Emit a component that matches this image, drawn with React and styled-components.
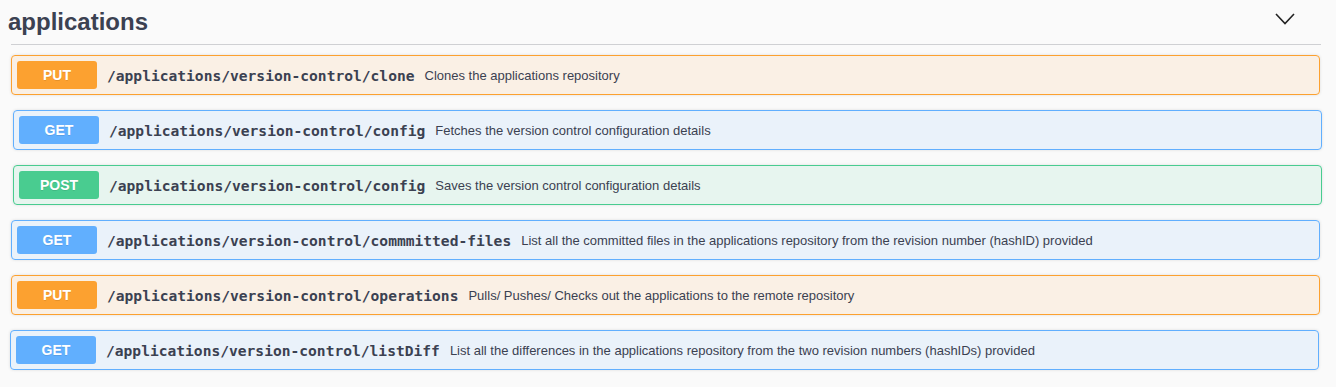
import React from "react";
import styled, { createGlobalStyle } from "styled-components";

const Global = createGlobalStyle`
  html, body { margin: 0; padding: 0; background: #fafafa; }
  body { font-family: "Liberation Sans", Arial, sans-serif; color: #3b4151; }
`;

const COLORS = {
  PUT: { main: "#fca130", bg: "rgba(252,161,48,0.1)" },
  GET: { main: "#61affe", bg: "rgba(97,175,254,0.1)" },
  POST: { main: "#49cc90", bg: "rgba(73,204,144,0.1)" },
};

const Section = styled.section`
  display: flex;
  flex-direction: column;
  width: 1336px;
  padding-bottom: 18px;
`;

const Header = styled.div`
  display: flex;
  align-items: center;
  justify-content: space-between;
  margin: 0 15px 10px 11px;
  padding: 8px 26px 8px 0;
  border-bottom: 1px solid #cfd0d3;
`;

const Title = styled.h3`
  margin: 0 0 0 -3px;
  font-family: "Liberation Sans", Arial, sans-serif;
  font-size: 24px;
  font-weight: 700;
  line-height: 28px;
  color: #3b4151;
`;

const Chevron = styled.svg`
  width: 20px;
  height: 20px;
  margin-top: -6px;
`;

const List = styled.div`
  display: flex;
  flex-direction: column;
  gap: 15px;
`;

const Row = styled.div`
  display: flex;
  align-items: center;
  box-sizing: border-box;
  width: 1309px;
  height: 40px;
  margin-left: ${(p) => p.$dx}px;
  padding: 5px;
  border: 1px solid ${(p) => COLORS[p.$method].main};
  border-radius: 4px;
  background: ${(p) => COLORS[p.$method].bg};
  box-shadow: 0 0 3px rgba(0, 0, 0, 0.12);
`;

const Badge = styled.span`
  flex: none;
  display: flex;
  align-items: center;
  justify-content: center;
  width: 80px;
  height: 28px;
  border-radius: 3px;
  background: ${(p) => COLORS[p.$method].main};
  color: #fff;
  font-family: "Liberation Sans", Arial, sans-serif;
  font-size: 14px;
  font-weight: 700;
  text-shadow: 0 1px 0 rgba(0, 0, 0, 0.1);
`;

const Path = styled.span`
  margin-left: 10px;
  font-family: "DejaVu Sans Mono", monospace;
  font-size: 14.6px;
  font-weight: 700;
  color: #3b4151;
  white-space: nowrap;
`;

const Desc = styled.span`
  margin-left: 10px;
  font-family: "Liberation Sans", Arial, sans-serif;
  font-size: 13px;
  color: #3b4151;
  white-space: nowrap;
`;

const ops = [
  { m: "PUT", dx: 11, path: "/applications/version-control/clone", desc: "Clones the applications repository" },
  { m: "GET", dx: 13, path: "/applications/version-control/config", desc: "Fetches the version control configuration details" },
  { m: "POST", dx: 13, path: "/applications/version-control/config", desc: "Saves the version control configuration details" },
  { m: "GET", dx: 11, path: "/applications/version-control/commmitted-files", desc: "List all the committed files in the applications repository from the revision number (hashID) provided" },
  { m: "PUT", dx: 11, path: "/applications/version-control/operations", desc: "Pulls/ Pushes/ Checks out the applications to the remote repository" },
  { m: "GET", dx: 10, path: "/applications/version-control/listDiff", desc: "List all the differences in the applications repository from the two revision numbers (hashIDs) provided" },
];

export default function App() {
  return (
    <>
      <Global />
      <Section>
        <Header>
          <Title>applications</Title>
          <Chevron viewBox="0 0 20 20">
            <polyline points="1,5 10,14.5 19,5" fill="none" stroke="#222" strokeWidth="1.6" />
          </Chevron>
        </Header>
        <List>
          {ops.map((o, i) => (
            <Row key={i} $method={o.m} $dx={o.dx}>
              <Badge $method={o.m}>{o.m}</Badge>
              <Path>{o.path}</Path>
              <Desc>{o.desc}</Desc>
            </Row>
          ))}
        </List>
      </Section>
    </>
  );
}
